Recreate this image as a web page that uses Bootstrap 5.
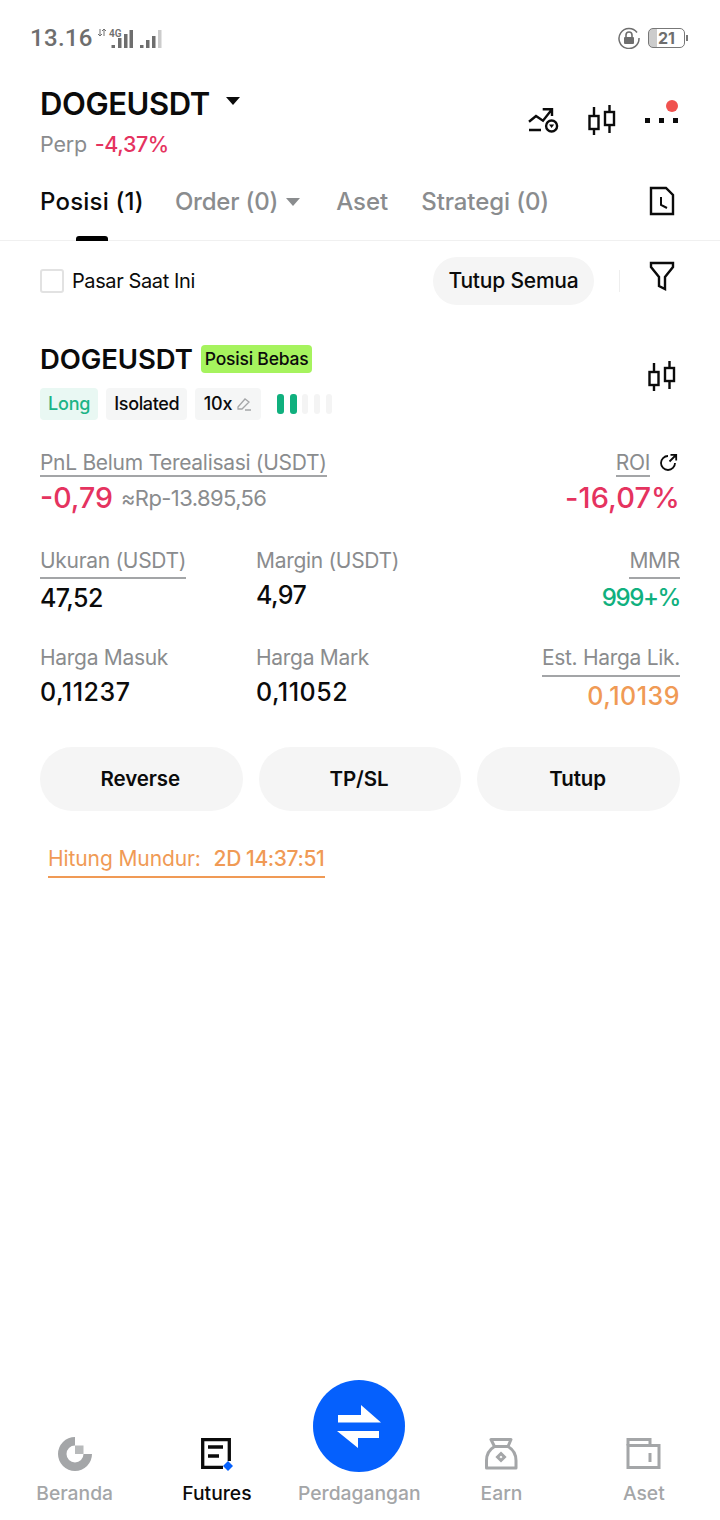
<!DOCTYPE html>
<html lang="en">
<head>
  <meta charset="UTF-8">
  <meta name="viewport" content="width=device-width, initial-scale=1">
  <title>DOGEUSDT</title>
  <link href="https://cdn.jsdelivr.net/npm/bootstrap@5.3.3/dist/css/bootstrap.min.css" rel="stylesheet">
  <style>
    html, body { height: 1520px; margin: 0; overflow: hidden; }
    body { font-family: Inter, "Liberation Sans", sans-serif; color: #0b0b0b; background: #fff; }
    .screen { height: 1520px; }
    .ic { stroke: #0b0b0b; fill: none; stroke-width: 2.4; flex: none; }

    .status-bar { height: 76px; padding: 0 32px 0 30px; color: #6e6e6e; }
    .clock { font-size: 24px; font-weight: 500; letter-spacing: .3px; line-height: 1; font-family: Roboto, sans-serif; }
    .batt { width: 37px; height: 20px; border: 1px solid #777; border-radius: 5px; font-size: 16px; font-weight: 700; line-height: 18px; text-align: center; background: linear-gradient(90deg, #ccc 8px, #fff 8px); }
    .batt-tip { width: 2px; height: 6px; background: #777; margin-left: 1px; }

    .head { height: 84px; padding: 0 42px 0 40px; }
    .pair { font-size: 31px; font-weight: 600; line-height: 38px; letter-spacing: -.4px; margin-top: 9px; }
    .caret-down { width: 0; height: 0; border-left: 7px solid transparent; border-right: 7px solid transparent; border-top: 8px solid #0b0b0b; margin: 3px 0 0 16px; }
    .perp { font-size: 21.5px; line-height: 28px; margin-top: 7px; color: #8a8c8e; letter-spacing: -.2px; }
    .perp .red { font-weight: 500; margin-left: 2px; letter-spacing: -.4px; }
    .red { color: #e5335f; }
    .head-icons { margin-top: 28px; gap: 27px; }
    .more-wrap { position: relative; width: 34px; height: 30px; }
    .red-dot { position: absolute; right: 0; top: -4px; width: 12px; height: 12px; border-radius: 50%; background: #f0524f; }

    .tab-row { height: 81px; padding: 0 45px 0 40px; border-bottom: 1px solid #f0f0f0; position: relative; }
    .tab-item { font-size: 24px; font-weight: 500; line-height: 30px; color: #8a8c8e; margin-top: 27px; white-space: nowrap; }
    .tab-item.on { color: #0b0b0b; letter-spacing: .2px; }
    .tab-order { margin-left: 31px; letter-spacing: -.2px; }
    .tab-aset { margin-left: 36px; }
    .tab-strat { margin-left: 33px; letter-spacing: -.1px; }
    .tab-file { margin-top: 26px; }
    .tab-bar { position: absolute; left: 76px; bottom: -1px; width: 32px; height: 5px; background: #000; border-radius: 3px 3px 0 0; }
    .caret-grey { display: inline-block; width: 0; height: 0; border-left: 7px solid transparent; border-right: 7px solid transparent; border-top: 8px solid #8a8c8e; margin-left: 8px; vertical-align: 4px; }

    .filter-row { height: 80px; padding: 0 45px 0 40px; }
    .check-box { width: 24px; height: 24px; border: 2px solid #e2e2e2; border-radius: 3px; margin-right: 8px; }
    .check-text { font-size: 20px; letter-spacing: -.4px; }
    .pill-close { background: #f5f5f5; border: 0; border-radius: 24px; height: 48px; width: 161px; padding: 0; font-size: 21px; font-weight: 500; color: #0b0b0b; letter-spacing: -.2px; }
    .v-sep { width: 1px; height: 22px; background: #eee; margin: 0 29px 0 25px; }
    .funnel { margin-top: -10px; }

    .pos { padding: 0 40px; }
    .pos-top { margin-top: 22px; }
    .pos-name { font-size: 27.5px; font-weight: 600; line-height: 32px; letter-spacing: -.1px; }
    .free-tag { background: #a6f35e; border-radius: 4px; font-size: 17.5px; font-weight: 500; line-height: 28px; padding: 0 4px; margin-left: 8px; letter-spacing: -.2px; }
    .tag-line { margin-top: 13px; gap: 8px; }
    .chip { height: 32px; line-height: 32px; padding: 0 8px; border-radius: 4px; background: #f5f6f6; font-size: 18px; font-weight: 500; letter-spacing: -.2px; }
    .chip-long { background: #e9f8f3; color: #1cb486; }
    .chip-iso { letter-spacing: -.35px; padding: 0 7.500px 0 8px; }
    .chip-lev { padding: 0 9px; }
    .lev { margin-left: 8px; }
    .lev i { width: 6px; height: 20px; border-radius: 3px; background: #f4f4f4; display: block; margin-right: 6px; }
    .lev i.full { background: #10b07e; width: 7px; margin-right: 5.500px; }
    .pos-candle { margin: 17px 3px 0 0; }

    .lbl { font-size: 21px; line-height: 24px; padding-top: 2px; color: #8a8c8e; letter-spacing: -.3px; }
    .dash { border-bottom: 2px solid #a3a5a7; display: inline-block; }
    .dash-gap { padding-bottom: 4px; }
    .dash-gap-big { padding-bottom: 5px; }
    .num { font-size: 25px; font-weight: 500; line-height: 32px; letter-spacing: -.6px; margin-top: 3px; }
    .num-low { margin-top: 6px; }
    .num-five { letter-spacing: .5px; }
    .pnl-block { margin-top: 29px; }
    .pnl-val { margin-top: 3px; }
    .pnl-big { font-size: 28.5px; font-weight: 500; line-height: 36px; color: #e5335f; }
    .pnl-roi { font-size: 29px; letter-spacing: .1px; }
    .rp { font-size: 22px; color: #8a8c8e; margin-left: 8px; letter-spacing: -.6px; }
    .roi-ic { margin: 4px 2px 0 10px; }
    .green { color: #10b07e; font-size: 24px; letter-spacing: -1.400px; }
    .orange { color: #f09a55; }
    .data-row { display: flex; }
    .data-row > div { width: 216px; }
    .data-row > div:last-child { flex: 1; text-align: right; }
    .row-size { margin-top: 31px; }
    .row-price { margin-top: 30px; }

    .act-row { gap: 16px; margin-top: 35px; }
    .act-btn { flex: 1; height: 64px; border: 0; border-radius: 32px; background: #f5f5f5; color: #0b0b0b; font-size: 20.500px; font-weight: 600; padding: 0 2px 0 0; letter-spacing: -.1px; }
    .countdown { margin: 33px 0 0 8px; width: 277px; border-bottom: 2px solid #f09a55; color: #f09a55; font-size: 21px; line-height: 30px; height: 34px; letter-spacing: -.1px; white-space: nowrap; }
    .countdown b { font-weight: 500; margin-left: 7px; letter-spacing: -.4px; }

    .tab-nav { display: grid; grid-template-columns: repeat(5, 142.300px); padding-left: 3.500px; height: 84px; }
    .nav-cell { text-align: center; font-size: 19.300px; font-weight: 500; color: #a4a6a8; line-height: 26px; white-space: nowrap; display: flex; flex-direction: column; align-items: center; }
    .nav-ic { height: 40px; width: 40px; margin: -2px 0 6px; }
    .nav-cell.on { color: #0b0b0b; }
    .fab { width: 92px; height: 92px; border-radius: 50%; background: #0560fd; margin-top: -56px; margin-bottom: 8px; display: flex; align-items: center; justify-content: center; }
  </style>
</head>
<body>
<div class="screen d-flex flex-column">

  <div class="status-bar d-flex align-items-center justify-content-between">
    <div class="d-flex align-items-center">
      <span class="clock">13.16</span>
      <svg width="70" height="24" viewBox="0 0 70 24" class="ms-1">
        <path d="M3 3v7M1 8l2 2 2-2M7 10V3M5 5l2-2 2 2" stroke="#6e6e6e" stroke-width="1" fill="none"/>
        <text x="12" y="11" font-size="10" font-weight="600" fill="#6e6e6e" font-family="Roboto, sans-serif">4G</text>
        <g fill="#6e6e6e">
          <rect x="14.500" y="19" width="3.500" height="3"/><rect x="21" y="12" width="3.500" height="10"/><rect x="27" y="8" width="3.500" height="14"/><rect x="32.500" y="4" width="3.500" height="18"/>
          <rect x="43" y="19" width="3.500" height="3"/><rect x="49" y="14" width="3.500" height="8"/><rect x="55" y="10" width="3.500" height="12"/>
        </g>
        <rect x="61" y="4" width="3.500" height="18" fill="#ccc"/>
      </svg>
    </div>
    <div class="d-flex align-items-center">
      <svg width="22" height="22" viewBox="0 0 22 22" class="me-2">
        <path d="M19 5.500A10 10 0 1 0 21 11" stroke="#6e6e6e" stroke-width="1.500" fill="none"/>
        <rect x="6" y="10" width="10" height="7" rx="1" fill="#6e6e6e"/>
        <path d="M8 10V8a3 3 0 0 1 6 0v2" stroke="#6e6e6e" stroke-width="1.600" fill="none"/>
      </svg>
      <div class="batt">21</div>
      <div class="batt-tip"></div>
    </div>
  </div>

  <div class="head d-flex justify-content-between">
    <div>
      <div class="d-flex align-items-center">
        <div class="pair">DOGEUSDT</div>
        <div class="caret-down"></div>
      </div>
      <div class="perp">Perp <span class="red">-4,37%</span></div>
    </div>
    <div class="head-icons d-flex">
      <svg width="32" height="30" viewBox="0 0 32 30" class="ic">
        <path d="M1 17.700l7-5.700 7 4.700 9-11.400M14.700 5.300H24V12M1 26h12"/>
        <circle cx="23.600" cy="22" r="5.500"/>
        <path d="M21 20.500h5.200L23.600 24z" fill="#0b0b0b" stroke="none"/>
      </svg>
      <svg width="30" height="32" viewBox="0 0 30 32" class="ic">
        <path d="M7 3v9M7 25v6M22.500 1v7M22.500 21v8"/>
        <rect x="2.500" y="12" width="9" height="13"/>
        <rect x="18" y="8" width="9" height="13"/>
      </svg>
      <div class="more-wrap">
        <svg width="34" height="30" viewBox="0 0 34 30">
          <rect x="1" y="14" width="5" height="5" fill="#0b0b0b"/>
          <rect x="15" y="14" width="5" height="5" fill="#0b0b0b"/>
          <rect x="29" y="14" width="5" height="5" fill="#0b0b0b"/>
        </svg>
        <div class="red-dot"></div>
      </div>
    </div>
  </div>

  <div class="tab-row d-flex">
    <div class="tab-item on">Posisi (1)</div>
    <div class="tab-item tab-order">Order (0)<span class="caret-grey"></span></div>
    <div class="tab-item tab-aset">Aset</div>
    <div class="tab-item tab-strat">Strategi (0)</div>
    <svg width="26" height="30" viewBox="0 0 26 30" class="ic ms-auto tab-file">
      <path d="M2 2h15l7 7v19H2z"/>
      <path d="M12 11v8l6 3" stroke-width="2"/>
    </svg>
    <div class="tab-bar"></div>
  </div>

  <div class="filter-row d-flex align-items-center">
    <div class="check-box"></div>
    <div class="check-text">Pasar Saat Ini</div>
    <button class="pill-close ms-auto">Tutup Semua</button>
    <div class="v-sep"></div>
    <svg width="26" height="30" viewBox="0 0 26 30" class="ic funnel">
      <path d="M2 2h22v4l-8 10v12l-6-3v-9L2 6z"/>
    </svg>
  </div>

  <div class="pos flex-grow-1">
    <div class="pos-top d-flex justify-content-between">
      <div>
        <div class="d-flex align-items-center">
          <div class="pos-name">DOGEUSDT</div>
          <div class="free-tag">Posisi Bebas</div>
        </div>
        <div class="tag-line d-flex align-items-center">
          <div class="chip chip-long">Long</div>
          <div class="chip chip-iso">Isolated</div>
          <div class="chip chip-lev d-flex align-items-center">10x
            <svg width="16" height="16" viewBox="0 0 16 16" class="ms-1">
              <path d="M2 11l7-8 4 3-7 7H2zM9 14h6" stroke="#a4a6a8" stroke-width="1.300" fill="none"/>
            </svg>
          </div>
          <div class="lev d-flex">
            <i class="full"></i><i class="full"></i><i></i><i></i><i></i>
          </div>
        </div>
      </div>
      <svg width="30" height="32" viewBox="0 0 30 32" class="ic pos-candle">
        <path d="M7 3v9M7 25v6M22.500 1v7M22.500 21v8"/>
        <rect x="2.500" y="12" width="9" height="13"/>
        <rect x="18" y="8" width="9" height="13"/>
      </svg>
    </div>

    <div class="pnl-block d-flex justify-content-between">
      <div>
        <div class="lbl dash">PnL Belum Terealisasi (USDT)</div>
        <div class="pnl-val d-flex align-items-center">
          <span class="pnl-big">-0,79</span><span class="rp">≈Rp-13.895,56</span>
        </div>
      </div>
      <div class="text-end">
        <div class="d-flex justify-content-end align-items-start">
          <span class="lbl dash">ROI</span>
          <svg width="18" height="18" viewBox="0 0 18 18" class="roi-ic">
            <path d="M15 10a7 7 0 1 1-7-7M10.500 1.800h5.700v5.700M16 2l-6.500 6.500" stroke="#0b0b0b" stroke-width="1.800" fill="none"/>
          </svg>
        </div>
        <div class="pnl-big pnl-roi pnl-val">-16,07%</div>
      </div>
    </div>

    <div class="data-row row-size">
      <div>
        <div class="lbl dash dash-gap">Ukuran (USDT)</div>
        <div class="num">47,52</div>
      </div>
      <div>
        <div class="lbl">Margin (USDT)</div>
        <div class="num num-low">4,97</div>
      </div>
      <div>
        <div class="lbl dash dash-gap">MMR</div>
        <div class="num green">999+%</div>
      </div>
    </div>

    <div class="data-row row-price">
      <div>
        <div class="lbl">Harga Masuk</div>
        <div class="num num-low num-five">0,11237</div>
      </div>
      <div>
        <div class="lbl">Harga Mark</div>
        <div class="num num-low num-five">0,11052</div>
      </div>
      <div>
        <div class="lbl dash dash-gap-big">Est. Harga Lik.</div>
        <div class="num num-five orange">0,10139</div>
      </div>
    </div>

    <div class="act-row d-flex">
      <button class="act-btn">Reverse</button>
      <button class="act-btn">TP/SL</button>
      <button class="act-btn">Tutup</button>
    </div>

    <div class="countdown">Hitung Mundur: <b>2D 14:37:51</b></div>
  </div>

  <div class="tab-nav">
    <div class="nav-cell">
      <svg viewBox="0 0 40 40" fill="#a4a6a8" class="nav-ic">
        <path d="M20 3A17 17 0 1 0 37 20H28.500A8.500 8.500 0 1 1 20 11.500z"/>
        <rect x="20" y="11.500" width="8.500" height="8.500" fill="#b8babb"/>
      </svg>
      Beranda
    </div>
    <div class="nav-cell on">
      <svg viewBox="0 0 40 40" fill="none" class="nav-ic">
        <path d="M32.300 27V5.700H5.700v27.600H26" stroke="#0b0b0b" stroke-width="3.300"/>
        <path d="M11 13h15M11 22h11" stroke="#0b0b0b" stroke-width="3.300"/>
        <path d="M31 27l5 5-5 5-5-5z" fill="#0560fd"/>
      </svg>
      Futures
    </div>
    <div class="nav-cell">
      <div class="fab">
        <svg width="46" height="46" viewBox="0 0 46 46" fill="#fff">
          <path d="M2 12h23V2l20 17.500H2z"/>
          <path d="M1 28h42v7H22v10z"/>
        </svg>
      </div>
      Perdagangan
    </div>
    <div class="nav-cell">
      <svg viewBox="0 0 40 40" fill="none" stroke="#a4a6a8" stroke-width="3" class="nav-ic">
        <path d="M9 5.500h20l-3 7c5 3 8 8 8 14v7.500H4.500V26.500c0-6 3-11 8-14z" stroke-linejoin="round"/>
        <path d="M12.500 12.500h13.500"/>
        <path d="M19 19.500l3.500 3.500-3.500 3.500-3.500-3.500z"/>
      </svg>
      Earn
    </div>
    <div class="nav-cell">
      <svg viewBox="0 0 40 40" fill="none" stroke="#a4a6a8" stroke-width="3" class="nav-ic">
        <path d="M4 11.500V5.500h22v6"/>
        <path d="M4 11.500h31v22H4z"/>
        <path d="M26 19v9"/>
      </svg>
      Aset
    </div>
  </div>
</div>
<script src="https://cdn.jsdelivr.net/npm/bootstrap@5.3.3/dist/js/bootstrap.bundle.min.js"></script>
</body>
</html>
